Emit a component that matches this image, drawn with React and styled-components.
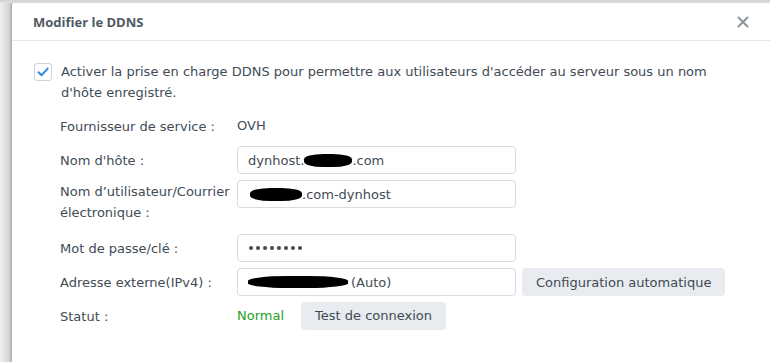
import React from "react";
import styled, { createGlobalStyle } from "styled-components";

const Global = createGlobalStyle`
  html, body { margin: 0; padding: 0; }
  body {
    width: 770px; height: 362px; overflow: hidden;
    background: linear-gradient(to right, #f2f2f2 0px, #d4d4d4 9px, #bdbdbd 12px);
    font-family: "DejaVu Sans", Verdana, sans-serif;
  }
`;

const Page = styled.div`
  padding: 3px 0 0 12px;
  height: 359px;
  background: linear-gradient(to bottom, #d0d0d0 0px, #e4e4e4 3px, transparent 3px);
`;

const Dialog = styled.div`
  background: #fff;
  height: 100%;
  width: 758px;
  border-top-left-radius: 2px;
  box-shadow: -1px 0 2px rgba(0,0,0,0.12);
`;

const Header = styled.div`
  height: 38px;
  box-sizing: border-box;
  display: flex;
  align-items: center;
  justify-content: space-between;
  padding: 0 20px 0 21px;
  border-bottom: 1px solid #e3e6ea;
`;

const Title = styled.div`
  font-family: "Open Sans", Roboto, sans-serif;
  font-weight: 700;
  font-size: 13px;
  color: #505963;
`;

const Close = styled.div`
  width: 14px; height: 14px;
  display: flex; align-items: center; justify-content: center;
`;

const Body = styled.div`
  padding: 20px 0 0 22px;
  color: #414b55;
  font-size: 13px;
`;

const CheckRow = styled.div`
  display: flex;
  align-items: flex-start;
  gap: 9px;
`;

const Box = styled.div`
  width: 16px; height: 16px;
  border: 1px solid #ccd3da;
  border-radius: 3px;
  display: flex; align-items: center; justify-content: center;
  flex-shrink: 0;
  margin-top: 2px;
`;

const CheckText = styled.div`
  line-height: 21px;
  width: 670px;
`;

const Form = styled.div`
  display: grid;
  grid-template-columns: 171px auto auto;
  column-gap: 6px;
  row-gap: 6px;
  margin: 9px 0 0 26px;
  align-items: center;
  justify-content: start;
`;

const Label = styled.div`
  line-height: 21px;
  align-self: ${p => (p.$top ? "start" : "center")};
  padding: ${p => (p.$top ? "1px 0 5px" : "0")};
`;

const Value = styled.div`
  line-height: 28px;
  display: flex;
  align-items: center;
  gap: 17px;
`;

const Input = styled.div`
  width: 279px;
  height: 28px;
  box-sizing: border-box;
  border: 1px solid #d7dce1;
  border-radius: 4px;
  padding: 0 10px;
  display: flex;
  align-items: center;
  align-self: ${p => (p.$top ? "start" : "center")};
`;

const Redact = styled.span`
  display: inline-block;
  width: ${p => p.$w}px;
  height: ${p => p.$h || 13}px;
  background: #000;
  border-radius: 40%;
  margin: ${p => p.$m || "0"};
  vertical-align: middle;
`;

const Button = styled.div`
  height: 28px;
  box-sizing: border-box;
  padding: 0 14px;
  background: #e8ecf0;
  border-radius: 4px;
  display: flex;
  align-items: center;
  color: #414b55;
  white-space: nowrap;
`;

const Green = styled.span`
  color: #1ca11f;
`;

const Dots = styled.div`
  display: flex;
  gap: 3px;
  padding-left: 1px;
`;

const Dot = styled.span`
  width: 4px;
  height: 4px;
  border-radius: 50%;
  background: #414b55;
`;

export default function App() {
  return (
    <>
      <Global />
      <Page>
        <Dialog>
          <Header>
            <Title>Modifier le DDNS</Title>
            <Close>
              <svg width="12" height="12" viewBox="0 0 12 12">
                <path d="M1.5 1.5 L10.5 10.5 M10.5 1.5 L1.5 10.5" stroke="#8d949b" strokeWidth="2" strokeLinecap="round" />
              </svg>
            </Close>
          </Header>
          <Body>
            <CheckRow>
              <Box>
                <svg width="14" height="14" viewBox="0 0 14 14">
                  <path d="M2.5 7.2 L5.6 10.2 L11.6 3.6" fill="none" stroke="#2b87e8" strokeWidth="2" strokeLinecap="round" strokeLinejoin="round" />
                </svg>
              </Box>
              <CheckText>
                Activer la prise en charge DDNS pour permettre aux utilisateurs d'accéder au serveur sous un nom d'hôte enregistré.
              </CheckText>
            </CheckRow>
            <Form>
              <Label>Fournisseur de service :</Label>
              <Value>OVH</Value>
              <span />

              <Label>Nom d'hôte :</Label>
              <Input>dynhost.<Redact $w={48} />.com</Input>
              <span />

              <Label $top>Nom d’utilisateur/Courrier électronique :</Label>
              <Input $top><Redact $w={52} $m="0 0 0 2px" />.com-dynhost</Input>
              <span />

              <Label>Mot de passe/clé :</Label>
              <Input>
                <Dots>
                  {Array.from({ length: 8 }).map((_, i) => <Dot key={i} />)}
                </Dots>
              </Input>
              <span />

              <Label>Adresse externe(IPv4) :</Label>
              <Input><Redact $w={100} $h={12} $m="0 3px 0 0" />(Auto)</Input>
              <Button>Configuration automatique</Button>

              <Label>Statut :</Label>
              <Value><Green>Normal</Green><Button>Test de connexion</Button></Value>
              <span />
            </Form>
          </Body>
        </Dialog>
      </Page>
    </>
  );
}
